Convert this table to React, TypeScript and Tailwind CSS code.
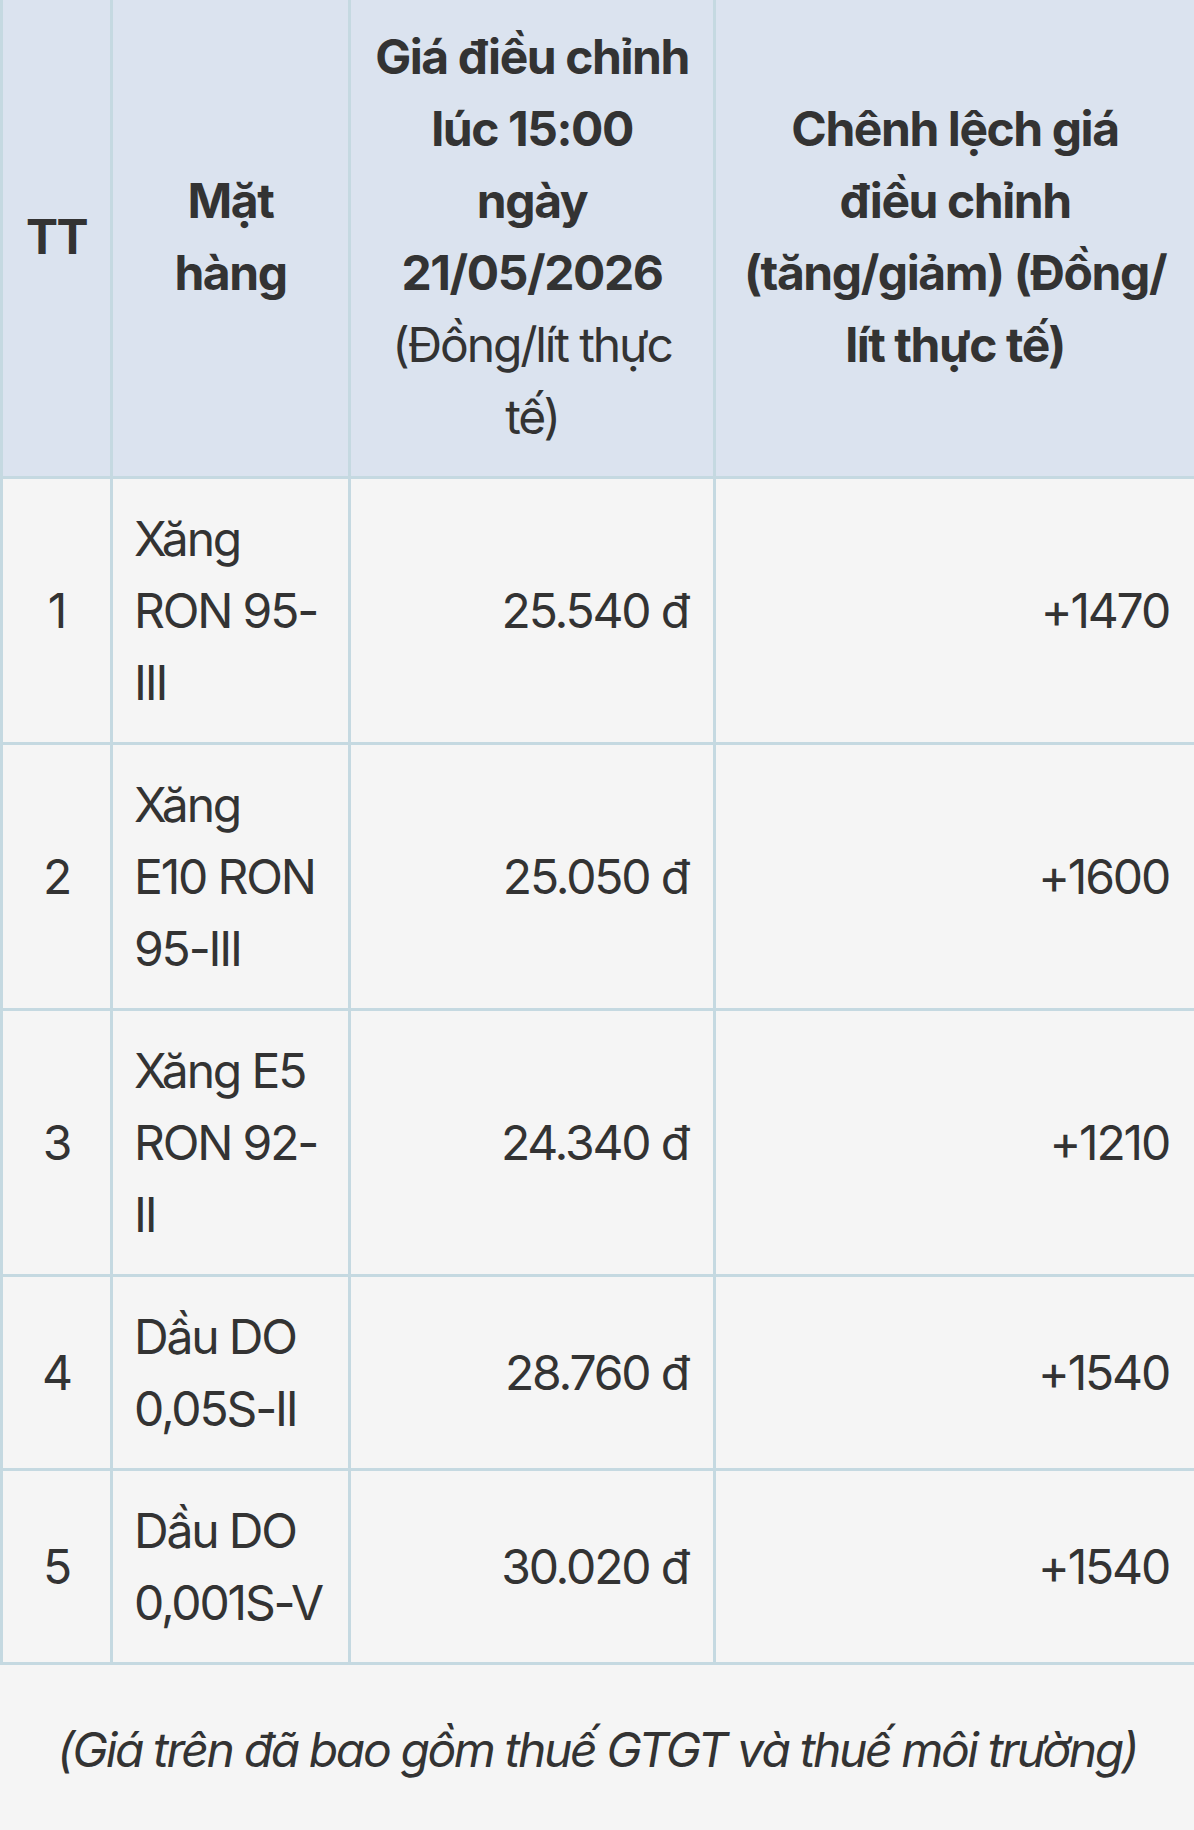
import React from "react";

const rows = [
  { tt: "1", name: ["Xăng", "RON 95-", "III"], price: "25.540 đ", diff: "+1470" },
  { tt: "2", name: ["Xăng", "E10 RON", "95-III"], price: "25.050 đ", diff: "+1600" },
  { tt: "3", name: ["Xăng E5", "RON 92-", "II"], price: "24.340 đ", diff: "+1210" },
  { tt: "4", name: ["Dầu DO", "0,05S-II"], price: "28.760 đ", diff: "+1540" },
  { tt: "5", name: ["Dầu DO", "0,001S-V"], price: "30.020 đ", diff: "+1540" },
];

function Lines({ lines }: { lines: string[] }) {
  return (
    <>
      {lines.map((l, i) => (
        <span key={i} className="block whitespace-nowrap">
          {l}
        </span>
      ))}
    </>
  );
}

export default function App() {
  return (
    <div
      className="w-[1194px] min-h-[1830px] bg-[#f5f5f5] text-[#333333] overflow-hidden"
      style={{ fontFamily: "Inter, 'Noto Sans', sans-serif" }}
    >
      <table className="w-[1194px] table-fixed border-collapse -mt-[6px] text-[48px] leading-[72px] tracking-[-0.045em]">
        <colgroup>
          <col className="w-[110px]" />
          <col className="w-[238px]" />
          <col className="w-[365px]" />
          <col className="w-[481px]" />
        </colgroup>
        <thead>
          <tr className="bg-[#dbe3ef]">
            <th className="border-[3px] border-[#c5d9e1] px-[16px] py-[23.5px] text-center align-middle font-bold tracking-[-0.03em]">
              TT
            </th>
            <th className="border-[3px] border-[#c5d9e1] px-[16px] py-[23.5px] text-center align-middle font-bold tracking-[-0.03em]">
              <Lines lines={["Mặt", "hàng"]} />
            </th>
            <th className="border-[3px] border-[#c5d9e1] px-[16px] py-[23.5px] text-center align-middle">
              <span className="font-bold tracking-[-0.03em]">
                <Lines lines={["Giá điều chỉnh", "lúc 15:00", "ngày", "21/05/2026"]} />
              </span>
              <span className="font-normal tracking-[-0.045em]">
                <Lines lines={["(Đồng/lít thực", "tế)"]} />
              </span>
            </th>
            <th className="border-[3px] border-[#c5d9e1] px-[16px] py-[23.5px] text-center align-middle font-bold tracking-[-0.03em]">
              <Lines lines={["Chênh lệch giá", "điều chỉnh", "(tăng/giảm) (Đồng/", "lít thực tế)"]} />
            </th>
          </tr>
        </thead>
        <tbody>
          {rows.map((r) => (
            <tr key={r.tt} className="bg-[#f5f5f5]">
              <td className="border-[3px] border-[#c5d9e1] px-[16px] py-[23.5px] text-center align-middle">
                {r.tt}
              </td>
              <td className="border-[3px] border-[#c5d9e1] pl-[21px] pr-[16px] py-[23.5px] text-left align-middle">
                <Lines lines={r.name} />
              </td>
              <td className="border-[3px] border-[#c5d9e1] pl-[16px] pr-[25px] py-[23.5px] text-right align-middle">
                {r.price}
              </td>
              <td className="border-[3px] border-[#c5d9e1] pl-[16px] pr-[25px] py-[23.5px] text-right align-middle">
                {r.diff}
              </td>
            </tr>
          ))}
        </tbody>
      </table>
      <div className="flex justify-center pt-[49px] pb-[46px]">
        <p className="text-[48px] leading-[72px] italic tracking-[-0.05em] whitespace-nowrap">
          (Giá trên đã bao gồm thuế GTGT và thuế môi trường)
        </p>
      </div>
    </div>
  );
}
